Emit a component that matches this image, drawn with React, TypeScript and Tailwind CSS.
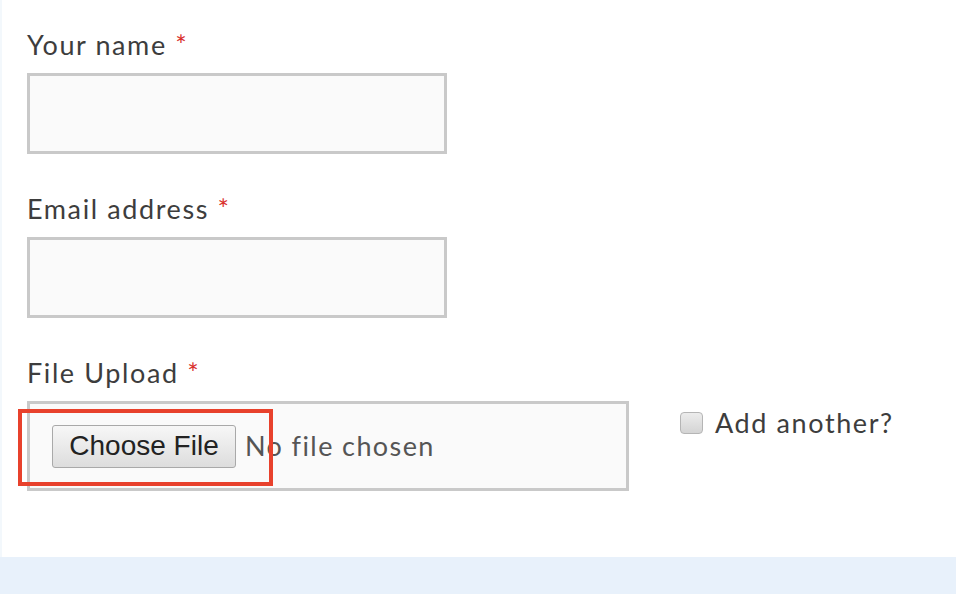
export default function App() {
  const label = "block text-[27px] leading-[32px] tracking-[1.6px] text-[#3d3d3d] font-['Lato',sans-serif]";
  const input = "block h-[81px] w-[420px] border-[3px] border-[#c9c9c9] bg-[#fafafa]";
  return (
    <div className="h-[594px] w-[956px] bg-[#e8f1fb]">
      <div className="h-[557px] border-l-2 border-[#f3f8fc] bg-white pl-[25px] pt-[29px]">
        <label className={label}>
          Your name <span className="text-[#d9302c]">*</span>
        </label>
        <div className={`${input} mt-[12px]`} />

        <label className={`${label} mt-[39px]`}>
          Email address <span className="text-[#d9302c]">*</span>
        </label>
        <div className={`${input} mt-[12px]`} />

        <label className={`${label} mt-[39px]`}>
          File Upload <span className="text-[#d9302c]">*</span>
        </label>
        <div className="mt-[12px] flex items-start">
          <div className="relative flex h-[90px] w-[602px] items-center border-[3px] border-[#c9c9c9] bg-[#fafafa] pl-[22px]">
            <button className="h-[43px] w-[184px] rounded-[3px] border border-[#a9a9a9] bg-gradient-to-b from-[#f7f7f7] to-[#dddddd] text-[28px] leading-none text-[#222] font-['Liberation_Sans',sans-serif]">
              Choose File
            </button>
            <span className="ml-[9px] text-[27px] tracking-[1.4px] text-[#555] font-['Lato',sans-serif]">No file chosen</span>
            <div className="pointer-events-none absolute left-[-12px] top-[5px] h-[77px] w-[255px] border-4 border-[#e8412c]" />
          </div>
          <label className="ml-[51px] mt-[6px] flex items-center text-[27px] leading-[32px] tracking-[1.6px] text-[#3d3d3d] font-['Lato',sans-serif]">
            <span className="mr-[12px] inline-block h-[22px] w-[23px] rounded-[4px] border border-[#b5b5b5] bg-gradient-to-b from-[#ececec] to-[#d4d4d4]" />
            Add another?
          </label>
        </div>
      </div>
    </div>
  );
}
